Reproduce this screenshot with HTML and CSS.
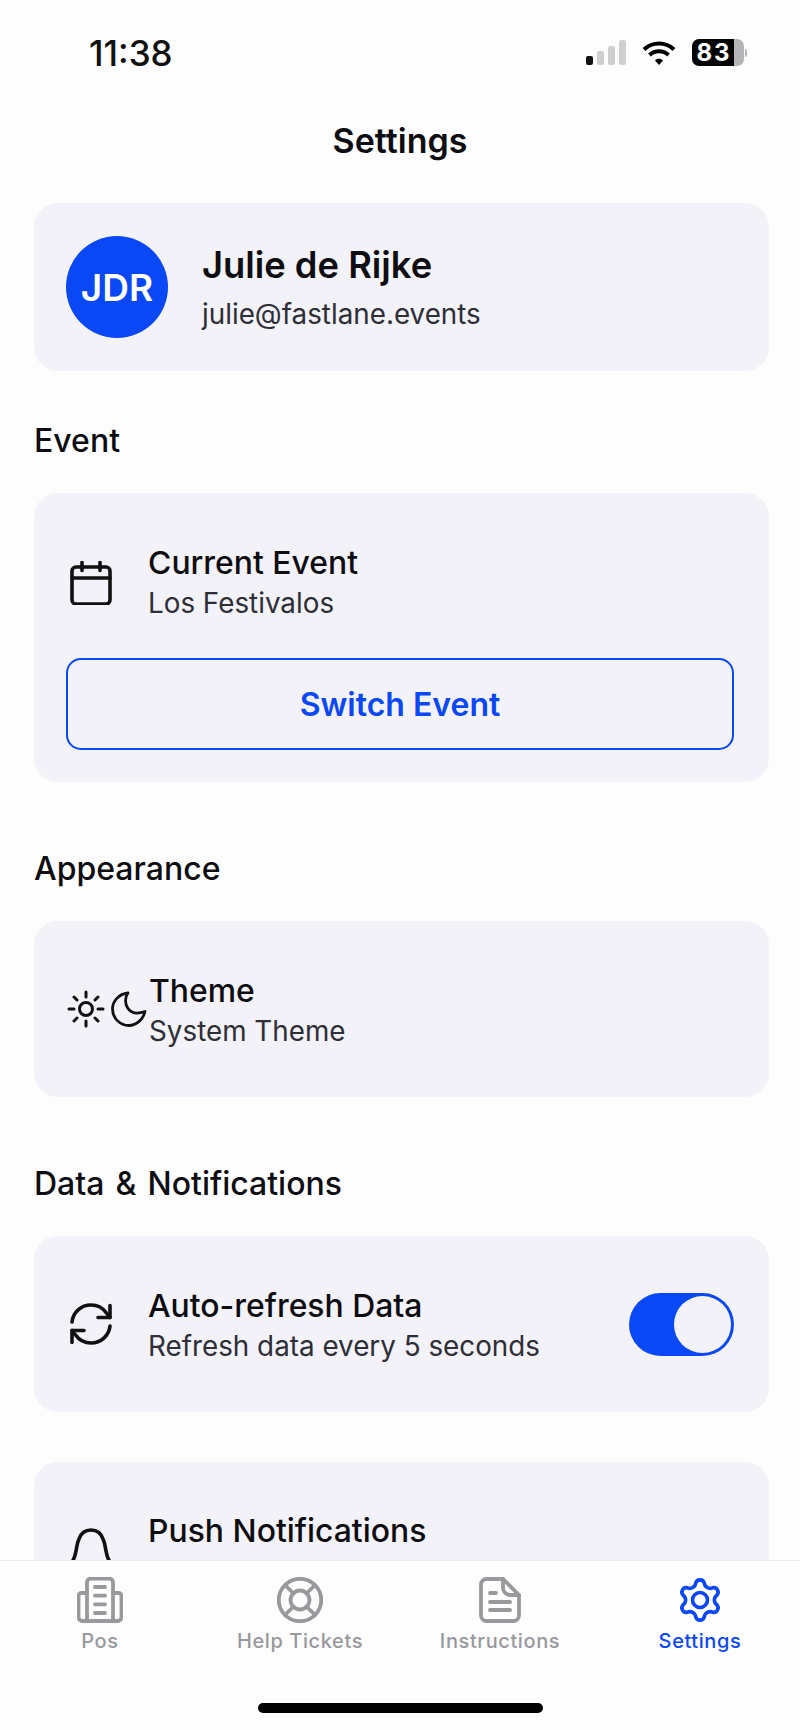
FILE: index.html
```html
<!DOCTYPE html>
<html lang="en">
<head>
    <meta charset="UTF-8">
    <title>Settings</title>
    <link rel="stylesheet" href="styles.css">
</head>
<body>
    <div class="screen">
        <div class="status-bar">
            <span class="status-time">11:38</span>
            <div class="status-icons">
                <div class="signal">
                    <span class="signal-bar bar-1 on"></span>
                    <span class="signal-bar bar-2"></span>
                    <span class="signal-bar bar-3"></span>
                    <span class="signal-bar bar-4"></span>
                </div>
                <svg class="wifi" viewBox="0 0 34 26" fill="none" stroke="#000" stroke-width="4">
                    <path d="M2 9.500C10.500 1.500 23.500 1.500 32 9.500"/>
                    <path d="M7.500 15C13 10 21 10 26.500 15"/>
                    <path d="M13 20.500 17 25l4-4.500C19 18.300 15 18.300 13 20.500z" fill="#000" stroke="none"/>
                </svg>
                <div class="battery">
                    <div class="battery-body">83</div>
                    <span class="battery-cap"></span>
                </div>
            </div>
        </div>

        <h1 class="page-title">Settings</h1>

        <div class="content">
            <div class="card profile-card">
                <div class="avatar">JDR</div>
                <div class="profile-text">
                    <div class="profile-name">Julie de Rijke</div>
                    <div class="profile-mail">julie@fastlane.events</div>
                </div>
            </div>

            <h2 class="section-title first">Event</h2>
            <div class="card event-card">
                <div class="row">
                    <svg class="row-icon" viewBox="0 0 44 44" fill="none" stroke="#111" stroke-width="3.600" stroke-linecap="round" stroke-linejoin="round">
                        <rect x="3" y="6" width="38" height="37" rx="4"/>
                        <path d="M3 17h38M13 1.500v8M31 1.500v8"/>
                    </svg>
                    <div class="row-text">
                        <div class="row-title">Current Event</div>
                        <div class="row-sub">Los Festivalos</div>
                    </div>
                </div>
                <button class="switch-btn">Switch Event</button>
            </div>

            <h2 class="section-title">Appearance</h2>
            <div class="card row-card">
                <div class="theme-icons">
                    <svg class="sun" viewBox="0 0 38 38" fill="none" stroke="#111" stroke-width="3" stroke-linecap="round">
                        <circle cx="19" cy="19" r="6.500"/>
                        <path d="M19 2v5M19 31v5M2 19h5M31 19h5M7 7l3 3M28 28l3 3M7 31l3-3M28 10l3-3"/>
                    </svg>
                    <svg class="moon" viewBox="0 0 36 36" fill="none" stroke="#111" stroke-width="2.800" stroke-linecap="round" stroke-linejoin="round">
                        <path d="M17 2C11 10 16 27 34 20.500 32 29 25 34.500 18 34.500 9 34.500 1.500 27 1.500 18 1.500 10 8 3 17 2z"/>
                    </svg>
                </div>
                <div class="row-text">
                    <div class="row-title">Theme</div>
                    <div class="row-sub">System Theme</div>
                </div>
            </div>

            <h2 class="section-title">Data &amp; Notifications</h2>
            <div class="card row-card">
                <svg class="row-icon" viewBox="0 0 44 44" fill="none" stroke="#111" stroke-width="3.600" stroke-linecap="round" stroke-linejoin="round">
                    <path d="M3 20C4 10.500 12 3 22 3c6.500 0 12.200 3.200 15.600 8.200L41 15.500"/>
                    <path d="M41 3.500v12H29"/>
                    <path d="M41 24c-1 9.500-9 17-19 17-6.500 0-12.200-3.200-15.600-8.200L3 28.500"/>
                    <path d="M3 40.500v-12h12"/>
                </svg>
                <div class="row-text">
                    <div class="row-title">Auto-refresh Data</div>
                    <div class="row-sub">Refresh data every 5 seconds</div>
                </div>
                <div class="toggle"><span class="toggle-knob"></span></div>
            </div>

            <div class="card row-card push-card">
                <svg class="row-icon" viewBox="0 0 44 44" fill="none" stroke="#111" stroke-width="3.600" stroke-linecap="round" stroke-linejoin="round">
                    <path d="M2 36c3-3 4-6 5-12 1-5 1-8 3-12C12 6 16 3 22 3s10 3 12 9c2 4 2 7 3 12 1 6 2 9 5 12z"/>
                </svg>
                <div class="row-text">
                    <div class="row-title">Push Notifications</div>
                </div>
            </div>
        </div>

        <div class="tab-bar">
            <div class="tabs">
                <div class="tab">
                    <svg class="tab-icon" viewBox="0 0 46 46" fill="none" stroke="currentColor" stroke-width="3.800" stroke-linecap="round" stroke-linejoin="round">
                        <path d="M10 44V5.500a4 4 0 0 1 4-4h18a4 4 0 0 1 4 4V44"/>
                        <path d="M36 16h5.500a3 3 0 0 1 3 3v21a4 4 0 0 1-4 4H5.500a4 4 0 0 1-4-4V19a3 3 0 0 1 3-3H10"/>
                        <path d="M18 10h10M18 18.600h10M18 27.300h10M18 36h10"/>
                    </svg>
                    <span class="tab-label">Pos</span>
                </div>
                <div class="tab">
                    <svg class="tab-icon" viewBox="0 0 46 46" fill="none" stroke="currentColor" stroke-width="3.800" stroke-linecap="round">
                        <circle cx="23" cy="23" r="21.200"/>
                        <circle cx="23" cy="23" r="9.500"/>
                        <path d="M8 8l8.500 8.500M38 8l-8.500 8.500M8 38l8.500-8.500M38 38l-8.500-8.500"/>
                    </svg>
                    <span class="tab-label">Help Tickets</span>
                </div>
                <div class="tab">
                    <svg class="tab-icon" viewBox="0 0 46 46" fill="none" stroke="currentColor" stroke-width="3.800" stroke-linecap="round" stroke-linejoin="round">
                        <path d="M26 2H9.500A5.500 5.500 0 0 0 4 7.500v31A5.500 5.500 0 0 0 9.500 44h27a5.500 5.500 0 0 0 5.500-5.500V18z"/>
                        <path d="M26 2v9a7 7 0 0 0 7 7h9"/>
                        <path d="M13 16h6M13 25h20M13 33h20"/>
                    </svg>
                    <span class="tab-label">Instructions</span>
                </div>
                <div class="tab active">
                    <svg class="tab-icon" viewBox="0 0 46 46" fill="none" stroke="currentColor" stroke-width="3.600" stroke-linecap="round" stroke-linejoin="round">
                        <circle cx="23" cy="23" r="7.500"/>
                        <path d="M18.770 6.020A4.400 4.400 0 0 1 27.230 6.020 6 6 0 0 0 35.590 10.840 4.400 4.400 0 0 1 39.820 18.180 6 6 0 0 0 39.820 27.820 4.400 4.400 0 0 1 35.590 35.160 6 6 0 0 0 27.230 39.980 4.400 4.400 0 0 1 18.770 39.980 6 6 0 0 0 10.410 35.160 4.400 4.400 0 0 1 6.180 27.820 6 6 0 0 0 6.180 18.180 4.400 4.400 0 0 1 10.410 10.840 6 6 0 0 0 18.770 6.020z"/>
                    </svg>
                    <span class="tab-label">Settings</span>
                </div>
            </div>
            <div class="home-indicator"></div>
        </div>
    </div>
</body>
</html>
```

FILE: styles.css
```css
html, body {
    margin: 0;
    padding: 0;
    background: #fdfdfe;
    font-family: 'Inter', 'Liberation Sans', sans-serif;
}
.screen {
    width: 800px;
    height: 1730px;
    display: flex;
    flex-direction: column;
    overflow: hidden;
    color: #0d0d12;
}
.status-bar {
    flex: none;
    height: 105px;
    padding: 0 53px 0 89px;
    box-sizing: border-box;
    display: flex;
    align-items: center;
    justify-content: space-between;
}
.status-time {
    font-size: 35px;
    font-weight: 500;
    color: #111;
}
.status-icons {
    display: flex;
    align-items: center;
    gap: 16px;
}
.signal {
    display: flex;
    align-items: flex-end;
    gap: 4px;
    height: 25px;
}
.signal-bar {
    width: 7px;
    background: #cfcfd2;
    border-radius: 2px;
}
.signal-bar.on { background: #111; }
.bar-1 { height: 9px; }
.bar-2 { height: 14px; }
.bar-3 { height: 19px; }
.bar-4 { height: 25px; }
.wifi {
    width: 34px;
    height: 26px;
}
.battery {
    display: flex;
    align-items: center;
    gap: 1px;
}
.battery-body {
    width: 52px;
    height: 27px;
    border-radius: 7px;
    background: linear-gradient(to right, #050505 81%, #b5b5b8 81%);
    color: #fff;
    font-size: 24px;
    font-weight: 700;
    letter-spacing: 2px;
    line-height: 27px;
    text-align: center;
    box-sizing: border-box;
    padding-right: 8px;
}
.battery-cap {
    width: 2px;
    height: 8px;
    border-radius: 0 2px 2px 0;
    background: #b5b5b8;
}
.page-title {
    flex: none;
    margin: 0;
    height: 72px;
    line-height: 72px;
    font-size: 34px;
    font-weight: 600;
    text-align: center;
}
.content {
    flex: 1;
    min-height: 0;
    overflow: hidden;
    padding: 26px 31px 0 34px;
}
.card {
    background: #f2f2f8;
    border-radius: 24px;
    box-sizing: border-box;
}
.profile-card {
    height: 168px;
    padding: 0 35px 0 32px;
    display: flex;
    align-items: center;
    gap: 34px;
}
.avatar {
    width: 102px;
    height: 102px;
    flex: none;
    border-radius: 50%;
    background: #0a47f5;
    color: #fff;
    font-size: 37px;
    font-weight: 600;
    display: flex;
    align-items: center;
    justify-content: center;
}
.profile-name {
    font-size: 36.300px;
    font-weight: 600;
    margin-bottom: 10px;
}
.profile-mail {
    font-size: 27.800px;
    color: #2e2e36;
}
.section-title {
    margin: 0;
    font-size: 32px;
    font-weight: 500;
    line-height: 36px;
    word-spacing: 2.500px;
    padding: 69px 0 34px;
}
.section-title.first {
    padding-top: 52px;
}
.event-card {
    height: 289px;
    padding: 49px 35px 0 32px;
}
.row {
    display: flex;
    align-items: center;
    gap: 32px;
}
.row-card {
    height: 176px;
    padding: 0 35px 0 32px;
    display: flex;
    align-items: center;
    gap: 32px;
}
.row-icon {
    width: 44px;
    height: 44px;
    margin: 0 3px;
    flex: none;
}
.row-text {
    flex: 1;
}
.row-card .row-text {
    padding-top: 3px;
}
.row-title {
    font-size: 31.900px;
    font-weight: 500;
    line-height: 41px;
}
.row-sub {
    font-size: 27.800px;
    line-height: 41px;
    color: #2e2e36;
}
.switch-btn {
    display: block;
    width: 100%;
    height: 92px;
    margin-top: 34px;
    background: transparent;
    border: 2px solid #0a47f5;
    border-radius: 15px;
    color: #0a47f5;
    font-family: inherit;
    font-size: 32px;
    font-weight: 600;
}
.theme-icons {
    display: flex;
    align-items: center;
    gap: 6px;
    flex: none;
    width: 83px;
    margin: 0 -33px 0 1px;
}
.sun {
    width: 38px;
    height: 38px;
    flex: none;
}
.moon {
    width: 36px;
    height: 36px;
    flex: none;
}
.toggle {
    width: 105px;
    height: 63px;
    flex: none;
    border-radius: 32px;
    background: #0a47f5;
    padding: 3px;
    box-sizing: border-box;
    display: flex;
    justify-content: flex-end;
}
.toggle-knob {
    width: 57px;
    height: 57px;
    border-radius: 50%;
    background: #f2f2f8;
}
.push-card {
    margin-top: 50px;
    align-items: flex-start;
    padding-top: 48px;
}
.push-card .row-text {
    padding-top: 0;
}
.push-card .row-icon {
    margin-top: 17px;
}
.tab-bar {
    flex: none;
    height: 170px;
    background: #fdfdfe;
    border-top: 1px solid #ececf0;
    box-sizing: border-box;
    display: flex;
    flex-direction: column;
    align-items: center;
}
.tabs {
    align-self: stretch;
    display: grid;
    grid-template-columns: repeat(4, 200px);
    padding-top: 16px;
}
.tab {
    display: flex;
    flex-direction: column;
    align-items: center;
    gap: 5px;
    color: #98989d;
}
.tab.active { color: #0a47f5; }
.tab-icon {
    width: 46px;
    height: 46px;
}
.tab-label {
    font-size: 20px;
    font-weight: 500;
    letter-spacing: 0.6px;
    line-height: 26px;
}
.home-indicator {
    width: 285px;
    height: 10px;
    border-radius: 5px;
    background: #000;
    margin-top: 49px;
}
```
